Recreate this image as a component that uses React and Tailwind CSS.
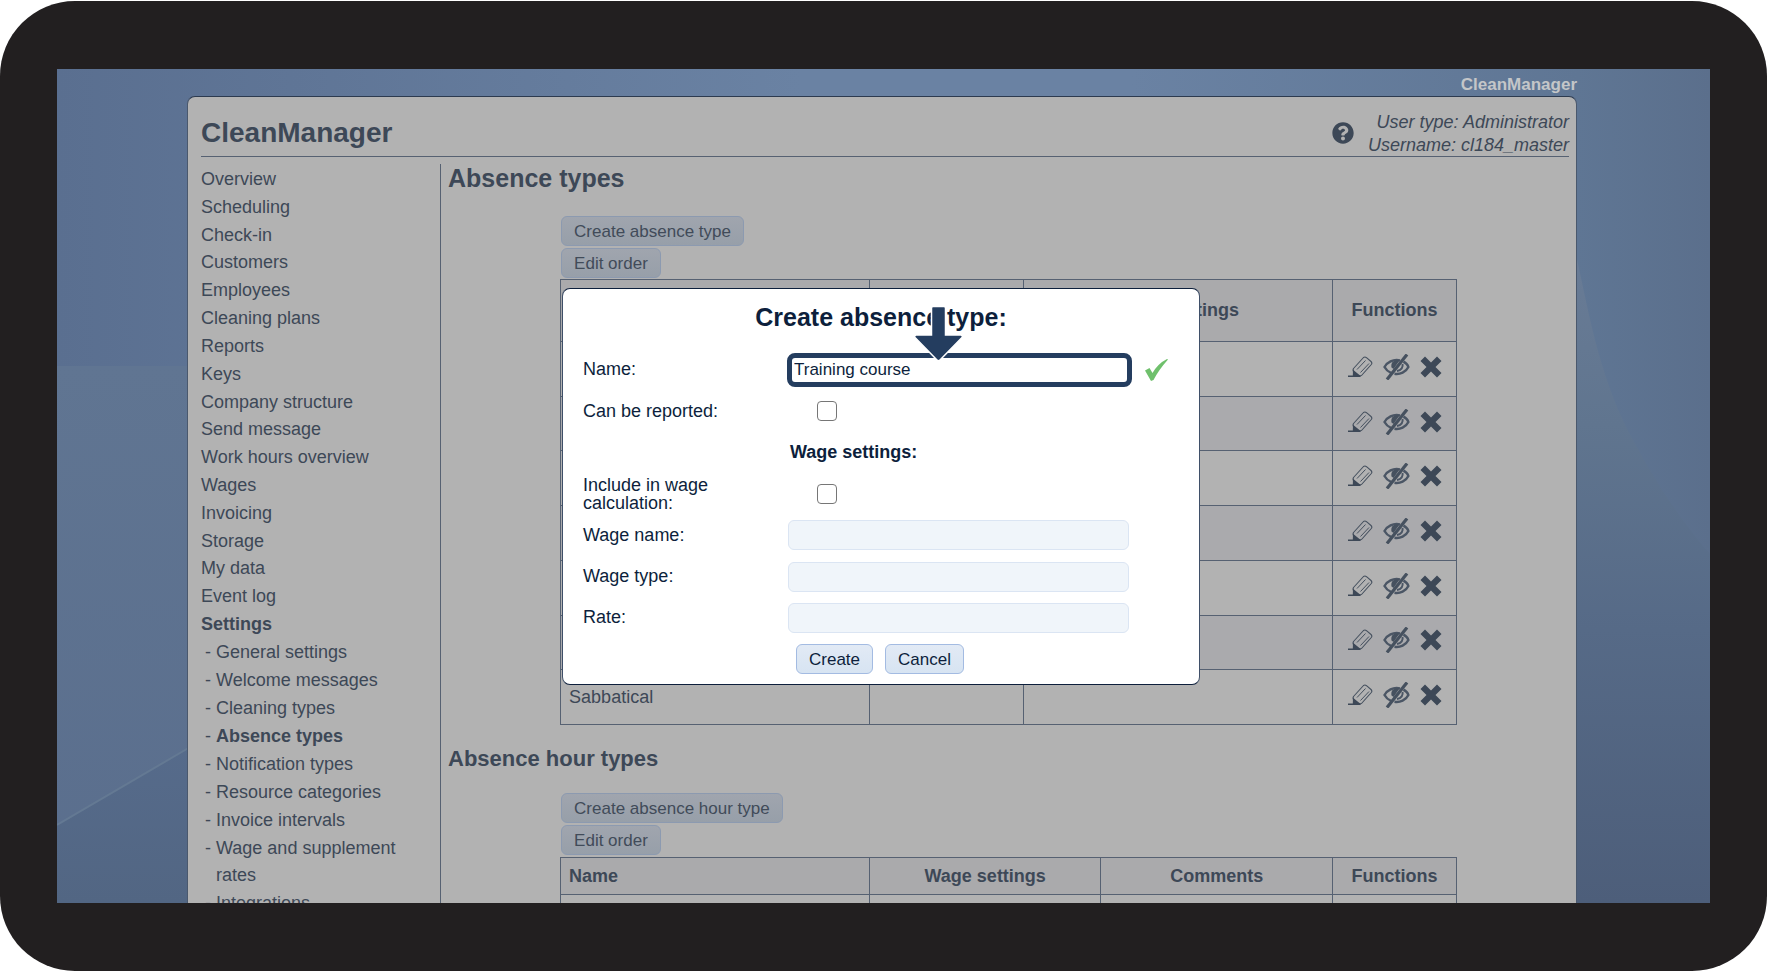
import { useState } from "react";
import { FaQuestionCircle } from "react-icons/fa";

const mainLinks = [
  "Overview",
  "Scheduling",
  "Check-in",
  "Customers",
  "Employees",
  "Cleaning plans",
  "Reports",
  "Keys",
  "Company structure",
  "Send message",
  "Work hours overview",
  "Wages",
  "Invoicing",
  "Storage",
  "My data",
  "Event log",
  "Settings",
];

const settingsLinks = [
  "General settings",
  "Welcome messages",
  "Cleaning types",
  "Absence types",
  "Notification types",
  "Resource categories",
  "Invoice intervals",
  "Wage and supplement rates",
  "Integrations",
];

const absenceTypes = ["", "", "", "", "", "", "Sabbatical"];

function Backdrop() {
  return (
    <svg
      className="absolute inset-0 h-full w-full"
      viewBox="0 0 1653 834"
      preserveAspectRatio="none"
      aria-hidden="true"
    >
      <defs>
        <linearGradient id="sky" x1="0" y1="0" x2="1" y2="0">
          <stop offset="0" stopColor="#5a6f90" />
          <stop offset="0.45" stopColor="#6a82a3" />
          <stop offset="0.65" stopColor="#6a82a3" />
          <stop offset="0.92" stopColor="#5f7694" />
          <stop offset="1" stopColor="#5b6f8c" />
        </linearGradient>
        <linearGradient id="leftGlow" x1="0" y1="0" x2="0" y2="1">
          <stop offset="0" stopColor="#607592" />
          <stop offset="1" stopColor="#5a6e8d" />
        </linearGradient>
        <linearGradient id="leftFloor" x1="0" y1="0" x2="0" y2="1">
          <stop offset="0" stopColor="#566b8b" />
          <stop offset="1" stopColor="#526683" />
        </linearGradient>
        <linearGradient id="rightFloor" x1="0" y1="0" x2="0" y2="1">
          <stop offset="0" stopColor="#6b7d97" />
          <stop offset="0.3" stopColor="#60758f" />
          <stop offset="0.6" stopColor="#566a87" />
          <stop offset="1" stopColor="#4d5e7a" />
        </linearGradient>
      </defs>
      <rect width="1653" height="834" fill="url(#sky)" />
      <rect y="297" width="140" height="537" fill="url(#leftGlow)" />
      <path d="M0 756 L140 674 V834 H0Z" fill="url(#leftFloor)" />
      <path d="M0 756 L140 674" stroke="#647993" strokeWidth="2" />
      <path
        d="M1510 150 C1530 220 1535 300 1580 378 C1605 425 1635 465 1653 485 V834 H1510Z"
        fill="url(#rightFloor)"
      />
    </svg>
  );
}

function PencilIcon() {
  return (
    <svg width="25" height="22" viewBox="0 0 25 22" fill="none" aria-hidden="true">
      <path
        d="M5.5 12.5 L15.5 1.5 Q17 0.5 18.5 1.7 L23 5.5 Q24.5 7 23.3 8.5 L13.5 19.5 L7 20.5 L5 14Z"
        stroke="#46515f"
        strokeWidth="1.1"
        strokeLinejoin="round"
      />
      <path
        d="M9 13.5 L17.5 4.5 M12.5 16.5 L21 7.5"
        stroke="#46515f"
        strokeWidth="1"
      />
      <path d="M5 13.8 L13 20.2 L12 21 H0 V19.6 H4.8Z" fill="#3d4857" />
    </svg>
  );
}

function HiddenIcon() {
  return (
    <svg width="27" height="26" viewBox="0 0 27 26" fill="none" aria-hidden="true">
      <path
        d="M17 6.4 C10 4.8 4 8.5 1.5 13 C3 15.8 5 17.6 8 18.8"
        stroke="#4b5665"
        strokeWidth="2.4"
      />
      <path
        d="M20.5 7.6 C23 9 24.8 11 25.4 13 C23 18 17 20.8 11.5 19.8"
        stroke="#4b5665"
        strokeWidth="2.4"
      />
      <path d="M16.5 6.5 C10 5 7.5 9.5 8.5 13.5 L10.5 15 Z" fill="#46515f" />
      <path d="M19.5 10 C20.3 13 18.5 16.3 14 17" stroke="#4b5665" strokeWidth="2" />
      <path d="M24 0.5 L4 25.5" stroke="#46515f" strokeWidth="3.2" />
    </svg>
  );
}

function DeleteIcon() {
  return (
    <svg width="22" height="22" viewBox="0 0 22 22" aria-hidden="true">
      <path
        d="M5 0.5 L11 6.5 L17 0.5 L21.5 5 L15.5 11 L21.5 17 L17 21.5 L11 15.5 L5 21.5 L0.5 17 L6.5 11 L0.5 5Z"
        fill="#3d4857"
      />
    </svg>
  );
}

function PageButton({ children }) {
  return (
    <button
      type="button"
      className="h-[30px] rounded-md border border-[#8c9ab0] bg-linear-to-b from-[#a0a5ae] to-[#979fa9] px-3 text-[17px] leading-none text-[#414b59]"
    >
      {children}
    </button>
  );
}

function DialogButton({ children, ...props }) {
  return (
    <button
      className="h-[30px] rounded-md border border-[#a3bbe2] bg-linear-to-b from-[#e2eaf5] to-[#d7e4f2] px-3 text-[17px] leading-none text-[#0d1f3c]"
      {...props}
    >
      {children}
    </button>
  );
}

function SideMenu() {
  return (
    <nav className="w-[239px] shrink-0 pt-0.5">
      <ul className="flex h-[472px] flex-col justify-between">
        {mainLinks.map((link) => (
          <li key={link} className="leading-[27px]">
            <a href="#" className={link === "Settings" ? "font-bold" : ""}>
              {link}
            </a>
          </li>
        ))}
      </ul>
      <ul className="mt-px flex h-[278px] flex-col justify-between pl-1">
        {settingsLinks.map((link) => (
          <li key={link} className="flex leading-[27px]">
            <span className="w-[11px]">-</span>
            <a
              href="#"
              className={link === "Absence types" ? "w-[200px] font-bold" : "w-[200px]"}
            >
              {link}
            </a>
          </li>
        ))}
      </ul>
    </nav>
  );
}

function RowActions() {
  return (
    <div className="flex items-center justify-center gap-2.5 pb-1">
      <button type="button" aria-label="Edit">
        <PencilIcon />
      </button>
      <button type="button" aria-label="Hide">
        <HiddenIcon />
      </button>
      <button type="button" aria-label="Delete">
        <DeleteIcon />
      </button>
    </div>
  );
}

const cell = "border border-[#566172]";

function AbsenceTypesTable() {
  return (
    <table className="h-[446px] w-full table-fixed border-collapse">
      <colgroup>
        <col className="w-[34.5%]" />
        <col className="w-[17.2%]" />
        <col className="w-[34.5%]" />
        <col />
      </colgroup>
      <thead>
        <tr className="h-[62px] bg-[#aaaaac]">
          <th className={cell}></th>
          <th className={cell}></th>
          <th className={cell}>Wage settings</th>
          <th className={cell}>Functions</th>
        </tr>
      </thead>
      <tbody>
        {absenceTypes.map((name, index) => (
          <tr key={index} className="h-[54px] odd:bg-[#b2b2b2] even:bg-[#aaaaad]">
            <td className={`${cell} px-2`}>{name}</td>
            <td className={cell}></td>
            <td className={cell}></td>
            <td className={cell}>
              <RowActions />
            </td>
          </tr>
        ))}
      </tbody>
    </table>
  );
}

function AbsenceHourTypesTable() {
  return (
    <table className="w-full table-fixed border-collapse">
      <colgroup>
        <col className="w-[34.5%]" />
        <col className="w-[25.8%]" />
        <col className="w-[25.9%]" />
        <col />
      </colgroup>
      <thead>
        <tr className="h-[37px] bg-[#aaaaac]">
          <th className={`${cell} px-2 text-left`}>Name</th>
          <th className={cell}>Wage settings</th>
          <th className={cell}>Comments</th>
          <th className={cell}>Functions</th>
        </tr>
      </thead>
      <tbody>
        <tr className="h-[55px]">
          <td className={cell}></td>
          <td className={cell}></td>
          <td className={cell}></td>
          <td className={cell}></td>
        </tr>
      </tbody>
    </table>
  );
}

function ArrowDown() {
  return (
    <svg
      className="absolute top-4 left-[350px]"
      width="51"
      height="58"
      viewBox="0 0 51 58"
      aria-hidden="true"
    >
      <path
        d="M20 1.5 H31 Q32.5 1.5 32.5 3 V30 H48 Q50 30.5 49 32.5 L27 55 Q25.5 56.5 24 55 L2 32.5 Q1 30.5 3 30 H18.5 V3 Q18.5 1.5 20 1.5Z"
        fill="#243d5f"
        stroke="#ffffff"
        strokeWidth="1.5"
      />
    </svg>
  );
}

const fieldRow = "flex items-center";
const fieldLabel = "leading-[18px]";
const checkbox = "ml-[29px] h-5 w-5 appearance-none rounded border border-[#767676] bg-white";
const disabledField =
  "h-[30px] w-[341px] rounded-md border border-[#dbe5f3] bg-[#f0f5fa]";

function CreateAbsenceDialog() {
  const [name, setName] = useState("Training course");

  return (
    <div
      role="dialog"
      aria-labelledby="dialog-title"
      className="relative w-[638px] rounded-lg border border-[#3f4f68] border-t-[#0d1f3c] border-b-[#0d1f3c] bg-white pr-8 pb-1 pl-5 text-[#0d1f3c]"
    >
      <h2
        id="dialog-title"
        className="-mr-3 flex h-[60px] items-center justify-center pb-0.5 text-[25px] font-bold"
      >
        Create absence type:
      </h2>
      <form className="grid h-[331px] grid-rows-8">
        <div className={fieldRow}>
          <div className="w-[204px]">
            <label htmlFor="name" className={fieldLabel}>
              Name:
            </label>
          </div>
          <input
            id="name"
            type="text"
            value={name}
            onChange={(e) => setName(e.target.value)}
            className="h-[34px] w-[345px] rounded-lg border-5 border-[#243d5f] px-0.5 text-[17px] outline-none"
          />
          <svg className="ml-3" width="25" height="24" viewBox="0 0 25 24" aria-hidden="true">
            <path d="M1 12.5 L5.5 10 L8.5 15 Q14 5.5 23 1 L24 1.5 Q15 11.5 9.5 22 L7 23Z" fill="#6fc06c" />
          </svg>
        </div>
        <div className={fieldRow}>
          <div className="w-[205px]">
            <label htmlFor="reported" className={fieldLabel}>
              Can be reported:
            </label>
          </div>
          <input id="reported" type="checkbox" className={checkbox} />
        </div>
        <div className="flex items-center pl-[207px]">
          <h3 className="font-bold">Wage settings:</h3>
        </div>
        <div className={fieldRow}>
          <div className="w-[205px] pr-12 leading-[18px]">
            <label htmlFor="include">Include in wage calculation:</label>
          </div>
          <input id="include" type="checkbox" className={checkbox} />
        </div>
        <div className={fieldRow}>
          <div className="w-[205px]">
            <label htmlFor="wage-name" className={fieldLabel}>
              Wage name:
            </label>
          </div>
          <input id="wage-name" type="text" disabled className={disabledField} />
        </div>
        <div className={fieldRow}>
          <div className="w-[205px]">
            <label htmlFor="wage-type" className={fieldLabel}>
              Wage type:
            </label>
          </div>
          <input id="wage-type" type="text" disabled className={disabledField} />
        </div>
        <div className={fieldRow}>
          <div className="w-[205px]">
            <label htmlFor="rate" className={fieldLabel}>
              Rate:
            </label>
          </div>
          <input id="rate" type="text" disabled className={disabledField} />
        </div>
        <div className="flex items-center gap-3 pl-[213px]">
          <DialogButton type="submit">Create</DialogButton>
          <DialogButton type="button">Cancel</DialogButton>
        </div>
      </form>
      <ArrowDown />
    </div>
  );
}

export default function App() {
  return (
    <div className="h-screen bg-white pt-px font-['Liberation_Sans',Arial,sans-serif] text-[18px]">
      {/* Device frame */}
      <div className="h-full rounded-[75px] bg-[#221f20] px-[57px] pt-[68px] pb-[68px]">
        <div className="relative h-full overflow-hidden bg-[#5f7594]">
          <Backdrop />

          {/* Page */}
          <div className="relative pr-[133px] pl-[130px] text-[#3d4857]">
            <p className="h-[27px] text-right text-[17px] leading-8 font-bold text-[#c4c6c8]">
              CleanManager
            </p>
            <div className="rounded-t-lg border border-[#4a586d] border-t-[#2c3a4f] bg-[#b2b2b2] pr-[7px] pl-[13px]">
              <header className="flex h-[60px] items-center justify-between border-b border-[#566172]">
                <p className="pt-3 text-[28px] font-bold">CleanManager</p>
                <div className="flex items-center gap-3.5 pt-3">
                  <FaQuestionCircle size={22} />
                  <p className="pt-0.5 text-right leading-[23px] italic">
                    User type: Administrator
                    <br />
                    Username: cl184_master
                  </p>
                </div>
              </header>

              <div className="flex pt-[7px]">
                <SideMenu />
                <main className="flex-1 border-l border-[#566172] pl-[7px]">
                  <h1 className="text-[25px] leading-7 font-bold">Absence types</h1>
                  <section className="mx-auto w-4/5 pt-6">
                    <div className="mb-px flex flex-col items-start gap-0.5 pl-px">
                      <PageButton>Create absence type</PageButton>
                      <PageButton>Edit order</PageButton>
                    </div>
                    <AbsenceTypesTable />
                  </section>

                  <h2 className="pt-5 text-[22px] leading-7 font-bold">
                    Absence hour types
                  </h2>
                  <section className="mx-auto w-4/5 pt-5">
                    <div className="mb-0.5 flex flex-col items-start gap-0.5 pl-px">
                      <PageButton>Create absence hour type</PageButton>
                      <PageButton>Edit order</PageButton>
                    </div>
                    <AbsenceHourTypesTable />
                  </section>
                </main>
              </div>
            </div>
          </div>

          {/* Dialog layer */}
          <div className="absolute inset-x-0 top-[219px] flex justify-center pr-[5px]">
            <CreateAbsenceDialog />
          </div>
        </div>
      </div>
    </div>
  );
}
